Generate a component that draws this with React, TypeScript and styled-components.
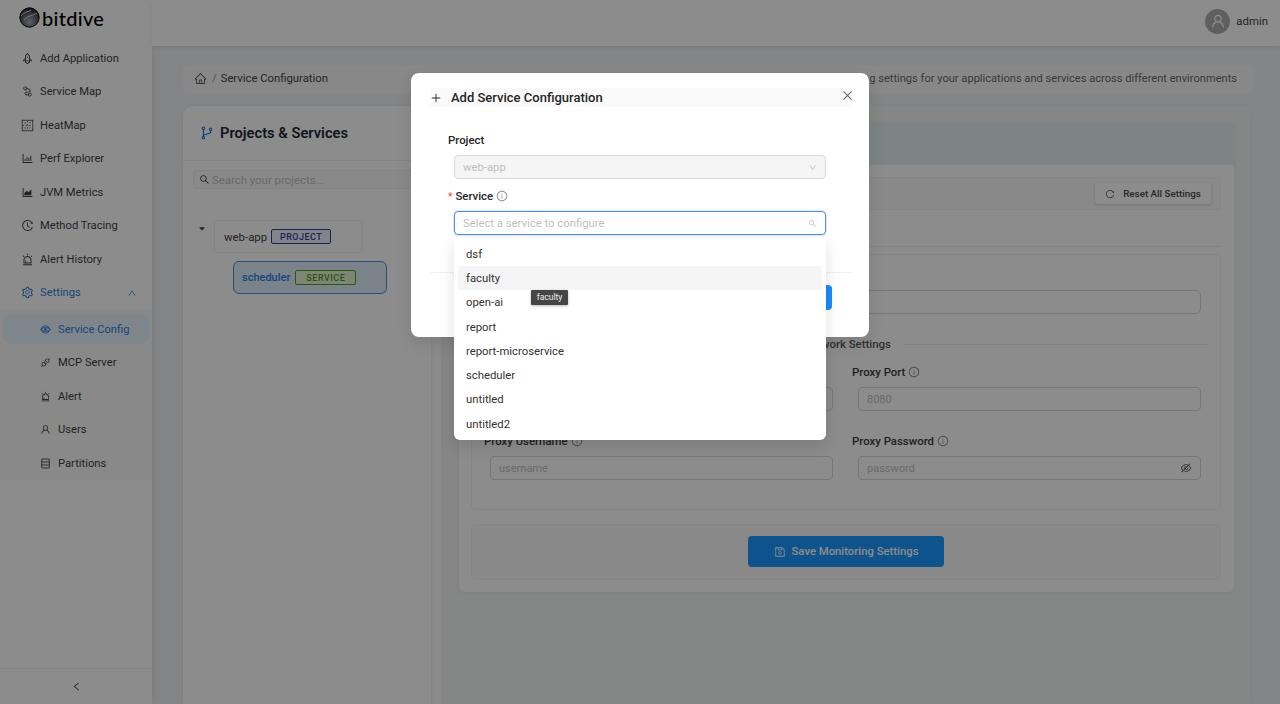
import React from "react";
import styled, { createGlobalStyle } from "styled-components";
import {
  AiOutlineRocket, AiOutlineNodeIndex, AiOutlineBarChart, AiOutlineAreaChart,
  AiOutlineHistory, AiOutlineAlert, AiOutlineSetting, AiOutlineUp, AiOutlineApi,
  AiOutlineUser, AiOutlineLeft, AiOutlineHome, AiOutlineBranches, AiOutlineSearch,
  AiOutlineReload, AiOutlineInfoCircle, AiOutlineEyeInvisible, AiOutlineSave, AiOutlinePlus, AiOutlineClose,
  AiOutlineDown, AiFillCaretDown,
} from "react-icons/ai";

const Global = createGlobalStyle`
  html, body { margin: 0; padding: 0; height: 100%; }
  body { font-family: Roboto, "Liberation Sans", sans-serif; color: #3f3f3f; background: #f0f2f5; overflow: hidden; }
  * { box-sizing: border-box; }
`;

const Page = styled.div`position: relative; display: flex; width: 1280px; height: 704px; overflow: hidden; background: #f0f2f5;`;

const Sidebar = styled.aside`width: 152px; flex: none; display: flex; flex-direction: column; background: #fff; box-shadow: 2px 0 6px rgba(0,0,0,.06);`;
const Logo = styled.div`height: 41px; padding: 0 0 6px 19px; display: flex; align-items: center; gap: 2px; font-family: Lato, sans-serif; font-size: 20px; line-height: 22px; font-weight: 500; color: #000; letter-spacing: .3px;`;
const Menu = styled.nav`display: flex; flex-direction: column;`;
const MenuItem = styled.div<{ $active?: boolean }>`height: 33.5px; padding-top: 1px; display: flex; align-items: center; gap: 6px; padding-left: 21px; font-size: 11.2px; color: ${p => p.$active ? "#2f7fe0" : "#3f3f3f"}; svg { font-size: 13px; width: 13px; height: 13px; flex: none; }`;
const Arrow = styled.span`margin-left: auto; margin-right: 15px; display: flex; svg { width: 10px; height: 10px; }`;
const SubMenu = styled.div`background: #fafafa; padding: 5px 0 0; height: 171px; display: flex; flex-direction: column;`;
const SubItem = styled.div<{ $active?: boolean }>`height: 30px; margin: 0 3px 3.5px; padding-left: 37px; flex: none; display: flex; align-items: center; gap: 7px; border-radius: 8px; font-size: 11.2px; background: ${p => p.$active ? "#e6f4ff" : "transparent"}; color: ${p => p.$active ? "#2f7fe0" : "#3f3f3f"}; svg { width: 11px; height: 11px; flex: none; }`;
const Collapse = styled.div`margin-top: auto; height: 36px; border-top: 1px solid #ececec; display: flex; align-items: center; justify-content: center; svg { font-size: 11px; }`;

const Main = styled.div`flex: 1; min-width: 0; display: flex; flex-direction: column;`;
const Header = styled.header`height: 46px; flex: none; background: #fff; box-shadow: 0 1px 4px rgba(0,0,0,.1); display: flex; align-items: center; justify-content: flex-end; gap: 6px; padding: 0 12px 4px 0; font-size: 11.4px;`;
const Avatar = styled.div`width: 25px; height: 25px; border-radius: 50%; background: #aeaeae; color: #fff; display: flex; align-items: center; justify-content: center; svg { font-size: 16px; }`;
const Content = styled.div`flex: 1; min-height: 0; padding: 19px 30px 0 31px; display: flex; flex-direction: column; gap: 13px;`;
const Breadcrumb = styled.div`height: 28px; flex: none; background: #f7f8f9; border-radius: 4px; display: flex; align-items: center; padding: 0 16px 2px 11px; font-size: 11.3px; gap: 5px; width: 1070px; svg { font-size: 13px; color: #595959; }`;
const Slash = styled.span`color: #8c8c8c; margin-right: -1px;`;
const CrumbHint = styled.span`margin-left: auto; color: #6a6a6a; font-size: 11.1px;`;
const MainCard = styled.div`flex: 1; min-height: 0; display: flex; gap: 12px; background: #fbfbfb; border-radius: 10px 10px 0 0; box-shadow: 0 1px 6px rgba(0,0,0,.05);`;
const LeftPanel = styled.section`width: 248px; flex: none; background: #fff; border-radius: 10px 0 0 0; box-shadow: 1px 0 3px rgba(0,0,0,.05);`;
const LeftHead = styled.div`height: 55px; border-bottom: 1px solid #eee; display: flex; align-items: center; gap: 5px; padding-left: 16px; font-size: 14.7px; font-weight: 600; color: #1f2937; svg { color: #1a6fd0; font-size: 16px; }`;
const SearchBox = styled.div`height: 19px; margin: 9px 10px 0; border: 1px solid #eee; border-radius: 3px; background: #fafafa; display: flex; align-items: center; gap: 2px; padding-left: 5px; color: #bfbfbf; font-size: 11.4px; svg { color: #333; font-size: 11px; }`;
const Tree = styled.div`padding: 31px 0 0 15px; display: flex; flex-direction: column; gap: 8px;`;
const TreeRow = styled.div`display: flex; align-items: flex-start; gap: 8px; svg { font-size: 8px; margin: 5px 0 0 0; flex: none; }`;
const ProjectNode = styled.div`width: 149px; height: 33px; border: 1px solid #f0f0f0; border-radius: 4px; background: #fff; display: flex; align-items: center; gap: 4px; padding-left: 9px; font-size: 11.4px;`;
const ServiceNode = styled.div`margin-left: 35px; width: 154px; height: 33px; border: 1px solid #4f8fd8; border-radius: 6px; background: #dceefa; display: flex; align-items: center; gap: 5px; padding-left: 8px; font-size: 11px; font-weight: 500; color: #2f7fe0;`;
const Tag = styled.span<{ $green?: boolean }>`height: 15px; width: ${p => p.$green ? "61px" : "60px"}; flex: none; display: flex; align-items: center; justify-content: center; border-radius: 2px; font-size: 9px; font-weight: 500; letter-spacing: .5px; border: 1px solid ${p => p.$green ? "#52a01f" : "#2f3f9e"}; color: ${p => p.$green ? "#4f9a1d" : "#2f3f9e"}; background: ${p => p.$green ? "#e4f5d0" : "#edf0fc"};`;

const RightPanel = styled.section`flex: 1; min-width: 0; padding: 16px; background: #f3f4f5; box-shadow: -1px 0 0 #e8e8e8;`;
const InnerCard = styled.div`height: 470px; border-radius: 6px; background: #fff; box-shadow: 0 1px 4px rgba(0,0,0,.05); display: flex; flex-direction: column;`;
const InnerHead = styled.div`height: 43px; flex: none; background: #e5eef5; border-radius: 6px 6px 0 0;`;
const InnerBody = styled.div`padding: 12px 13px 12px 12px; display: flex; flex-direction: column;`;
const Toolbar = styled.div`height: 33px; background: #fafafa; border: 1px solid #f5f5f5; display: flex; align-items: center; justify-content: flex-end; padding-right: 9px;`;
const ResetButton = styled.div`height: 21px; width: 116px; background: #fff; box-shadow: 0 1px 3px rgba(0,0,0,.18); border-radius: 2px; display: flex; align-items: center; justify-content: center; gap: 8px; font-size: 9.8px; font-weight: 500; color: #4a4a4a; svg { font-size: 10px; }`;
const TabLine = styled.div`height: 37px; flex: none; border-bottom: 1px solid #f0f0f0;`;
const FormSection = styled.div`margin-top: 7px; height: 256px; border: 1px solid #f2f2f2; border-radius: 4px; padding: 35px 19px 0 12px; display: flex; flex-direction: column;`;
const SoloInput = styled.div`margin-left: 6px; height: 24px; border: 1px solid #d9d9d9; border-radius: 5px; background: #fff; flex: none;`;
const Divider = styled.div`margin-top: 22px; height: 16px; display: flex; align-items: center; gap: 12px; font-size: 11.4px; font-weight: 500; color: #595959; padding-left: 319px; &::after { content: ""; flex: 1; height: 1px; background: #eaeaea; margin-right: -7px; }`;
const FieldGrid = styled.div`margin-top: 12.5px; display: grid; grid-template-columns: 349px 349px; column-gap: 19px; row-gap: 23px;`;
const Field = styled.div`display: flex; flex-direction: column; gap: 8px;`;
const Label = styled.div`display: flex; align-items: center; gap: 3px; height: 14px; font-size: 11.4px; font-weight: 500; color: #3a3a3a; svg { font-size: 12px; color: #8c8c8c; }`;
const FakeInput = styled.div`margin-left: 6px; height: 24px; padding-top: 1px; border: 1px solid #d9d9d9; border-radius: 4px; background: #fff; display: flex; align-items: center; justify-content: space-between; padding-left: 8px; padding-right: 8px; color: #bfbfbf; font-size: 11px; svg { color: #595959; font-size: 12px; }`;
const SaveBar = styled.div`margin-top: 14px; height: 56px; background: #fafafa; border: 1px solid #f5f5f5; border-radius: 4px; display: flex; align-items: center; justify-content: center; padding-bottom: 1px;`;
const SaveButton = styled.div`width: 196px; height: 31px; background: #1a98ff; border-radius: 4px; display: flex; align-items: center; justify-content: center; gap: 6px; color: #fff; font-size: 11.3px; font-weight: 500; svg { font-size: 12px; }`;

const Overlay = styled.div`position: absolute; inset: 0; background: rgba(0,0,0,.45);`;
const Modal = styled.div`position: absolute; left: 411px; top: 73px; width: 458px; height: 264px; background: #fff; border-radius: 8px; padding: 15px 17px 0 19px; box-shadow: 0 6px 16px rgba(0,0,0,.1); display: flex; flex-direction: column;`;
const CloseButton = styled.div`position: absolute; top: 16px; right: 15px; display: flex; color: #666; svg { font-size: 13px; }`;
const ModalTitle = styled.div`height: 19px; flex: none; background: #fafafa; display: flex; align-items: center; gap: 9px; font-size: 13px; font-weight: 500; color: #262626; svg { font-size: 12px; }`;
const ModalBody = styled.div`padding: 25.5px 0 0 18px; width: 414px; display: flex; flex-direction: column;`;
const ModalLabel = styled.div<{ $spaced?: boolean }>`height: 15px; display: flex; align-items: center; gap: 3px; font-size: 11.4px; font-weight: 500; color: #262626; margin-top: ${p => p.$spaced ? "10px" : "0"}; svg { color: #8c8c8c; font-size: 12px; }`;
const Required = styled.span`color: #ff4d4f; font-size: 10px;`;
const Control = styled.div<{ $disabled?: boolean; $focus?: boolean }>`position: relative; margin: 7px 0 0 6px; width: 372px; height: 24px; flex: none; border-radius: 4px; border: 1px solid ${p => p.$focus ? "#4f8fe8" : "#d9d9d9"}; box-shadow: ${p => p.$focus ? "0 0 0 1px rgba(79,143,232,.18)" : "none"}; background: ${p => p.$disabled ? "#f5f5f5" : "#fff"}; display: flex; align-items: center; justify-content: space-between; padding: 1px 8px 0; font-size: 11.3px; color: #bfbfbf; svg { font-size: 9px; }`;
const Dropdown = styled.div`position: absolute; top: 26px; left: -1px; width: 372px; height: 202px; background: #fff; border-radius: 0 0 6px 6px; box-shadow: 0 6px 16px rgba(0,0,0,.12); padding: 4px; display: flex; flex-direction: column; color: #333;`;
const Option = styled.div<{ $hover?: boolean }>`height: 24.3px; flex: none; padding: 1px 0 0 8px; display: flex; align-items: center; border-radius: 2px; font-size: 11.3px; background: ${p => p.$hover ? "#f5f5f5" : "transparent"};`;
const Tip = styled.div`position: absolute; left: 77px; top: 52px; width: 37px; height: 15px; background: #454545; color: #eee; font-size: 8.5px; display: flex; align-items: center; justify-content: center; box-shadow: 0 1px 3px rgba(0,0,0,.3); border-radius: 1px;`;
const ModalFooter = styled.div`margin-top: auto; border-top: 1px solid #f0f0f0; height: 65px; flex: none; display: flex; justify-content: flex-end; padding: 12px 20px 0 0;`;
const PrimaryButton = styled.div`width: 80px; height: 25px; background: #1a8cff; border-radius: 4px;`;

const LogoMark = () => (
  <svg width="21" height="21" viewBox="0 0 21 21">
    <defs>
      <radialGradient id="lg" cx="50%" cy="70%" r="70%">
        <stop offset="0%" stopColor="#aab0bc" />
        <stop offset="60%" stopColor="#565a66" />
        <stop offset="100%" stopColor="#17181c" />
      </radialGradient>
    </defs>
    <circle cx="10.5" cy="10.5" r="10" fill="url(#lg)" />
    <path d="M2 9 C6 4 10 5 12 3 M5 13 C9 8 14 9 18 6" stroke="#d8dbe0" strokeWidth="1" fill="none" />
    <circle cx="10.5" cy="10.5" r="9.6" fill="none" stroke="#15161a" strokeWidth="1" />
  </svg>
);

const HeatIcon = () => (
  <svg viewBox="0 0 16 16" fill="none" stroke="currentColor" strokeWidth="1">
    <rect x="1.5" y="1.5" width="13" height="13" />
    <path d="M4 5h2M10 4.5h2M4 11h2M10 11h2M8 2v12M2 8h12" strokeWidth=".9" strokeDasharray="2 2" />
  </svg>
);
const ConfigIcon = () => (
  <svg viewBox="0 0 16 16" fill="none" stroke="currentColor" strokeWidth="1.3">
    <circle cx="8" cy="8" r="5.5" />
    <ellipse cx="8" cy="8" rx="7.3" ry="2.8" />
    <circle cx="8" cy="8" r="1.6" fill="currentColor" />
  </svg>
);
const PartitionIcon = () => (
  <svg viewBox="0 0 16 16" fill="none" stroke="currentColor" strokeWidth="1.3">
    <rect x="2.5" y="1.5" width="11" height="13" rx=".5" />
    <path d="M2.5 5.8h11M2.5 10.2h11" />
  </svg>
);

const items: [React.ReactNode, string][] = [
  [<AiOutlineRocket />, "Add Application"],
  [<AiOutlineNodeIndex />, "Service Map"],
  [<HeatIcon />, "HeatMap"],
  [<AiOutlineBarChart />, "Perf Explorer"],
  [<AiOutlineAreaChart />, "JVM Metrics"],
  [<AiOutlineHistory />, "Method Tracing"],
  [<AiOutlineAlert />, "Alert History"],
];
const subs: [React.ReactNode, string][] = [
  [<ConfigIcon />, "Service Config"],
  [<AiOutlineApi />, "MCP Server"],
  [<AiOutlineAlert />, "Alert"],
  [<AiOutlineUser />, "Users"],
  [<PartitionIcon />, "Partitions"],
];
const options = ["dsf", "faculty", "open-ai", "report", "report-microservice", "scheduler", "untitled", "untitled2"];

export default function App() {
  return (
    <Page>
      <Global />
      <Sidebar>
        <Logo><LogoMark /><span>bitdive</span></Logo>
        <Menu>
          {items.map(([icon, label]) => <MenuItem key={label}>{icon}{label}</MenuItem>)}
          <MenuItem $active><AiOutlineSetting />Settings<Arrow><AiOutlineUp /></Arrow></MenuItem>
        </Menu>
        <SubMenu>
          {subs.map(([icon, label], i) => <SubItem key={label} $active={i === 0}>{icon}{label}</SubItem>)}
        </SubMenu>
        <Collapse><AiOutlineLeft /></Collapse>
      </Sidebar>
      <Main>
        <Header>
          <Avatar><AiOutlineUser /></Avatar>
          <span>admin</span>
        </Header>
        <Content>
          <Breadcrumb>
            <AiOutlineHome />
            <Slash>/</Slash>
            <span>Service Configuration</span>
            <CrumbHint>Configure monitoring settings for your applications and services across different environments</CrumbHint>
          </Breadcrumb>
          <MainCard>
            <LeftPanel>
              <LeftHead><AiOutlineBranches />Projects &amp; Services</LeftHead>
              <SearchBox><AiOutlineSearch />Search your projects...</SearchBox>
              <Tree>
                <TreeRow>
                  <AiFillCaretDown />
                  <ProjectNode>web-app <Tag>PROJECT</Tag></ProjectNode>
                </TreeRow>
                <ServiceNode>scheduler <Tag $green>SERVICE</Tag></ServiceNode>
              </Tree>
            </LeftPanel>
            <RightPanel>
              <InnerCard>
                <InnerHead />
                <InnerBody>
                  <Toolbar><ResetButton><AiOutlineReload />Reset All Settings</ResetButton></Toolbar>
                  <TabLine />
                  <FormSection>
                    <SoloInput />
                    <Divider>Network Settings</Divider>
                    <FieldGrid>
                      <Field>
                        <Label />
                        <FakeInput />
                      </Field>
                      <Field>
                        <Label>Proxy Port <AiOutlineInfoCircle /></Label>
                        <FakeInput>8080</FakeInput>
                      </Field>
                      <Field>
                        <Label>Proxy Username <AiOutlineInfoCircle /></Label>
                        <FakeInput>username</FakeInput>
                      </Field>
                      <Field>
                        <Label>Proxy Password <AiOutlineInfoCircle /></Label>
                        <FakeInput>password<AiOutlineEyeInvisible /></FakeInput>
                      </Field>
                    </FieldGrid>
                  </FormSection>
                  <SaveBar><SaveButton><AiOutlineSave />Save Monitoring Settings</SaveButton></SaveBar>
                </InnerBody>
              </InnerCard>
            </RightPanel>
          </MainCard>
        </Content>
      </Main>
      <Overlay />
      <Modal>
        <CloseButton><AiOutlineClose /></CloseButton>
        <ModalTitle><AiOutlinePlus />Add Service Configuration</ModalTitle>
        <ModalBody>
          <ModalLabel>Project</ModalLabel>
          <Control $disabled>web-app<AiOutlineDown /></Control>
          <ModalLabel $spaced><Required>*</Required>Service <AiOutlineInfoCircle /></ModalLabel>
          <Control $focus>
            Select a service to configure<AiOutlineSearch />
            <Dropdown>
              {options.map(o => <Option key={o} $hover={o === "faculty"}>{o}</Option>)}
              <Tip>faculty</Tip>
            </Dropdown>
          </Control>
        </ModalBody>
        <ModalFooter><PrimaryButton /></ModalFooter>
      </Modal>
    </Page>
  );
}
